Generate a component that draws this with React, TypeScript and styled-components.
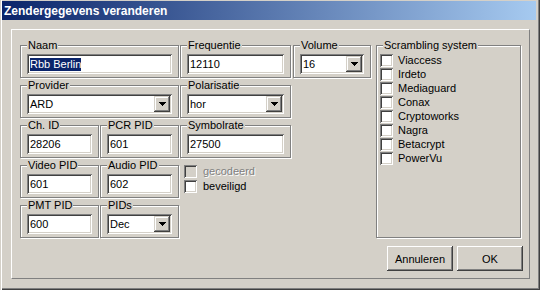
import React from "react";
import styled, { createGlobalStyle } from "styled-components";

const Global = createGlobalStyle`
  html, body { margin: 0; padding: 0; background: #d4d0c8; }
  body { font-family: "Liberation Sans", Arial, sans-serif; font-size: 11px; color: #000; }
  * { box-sizing: border-box; }
`;

const Window = styled.div`
  width: 540px;
  height: 290px;
  background: #d4d0c8;
  padding: 1px 4px 4px 2px;
  display: flex;
  flex-direction: column;
  box-shadow: inset 1px 0 #d4d0c8, inset 2px 0 #fff, inset -1px -1px #404040, inset -2px -2px #808080;
`;

const TitleBar = styled.div`
  height: 19px;
  flex: none;
  display: flex;
  align-items: center;
  padding-left: 2px;
  background: linear-gradient(to right, #0a246a, #a6caf0);
  color: #fff;
  font: bold 12px "Liberation Sans", Arial, sans-serif;
  white-space: nowrap;
`;

const Client = styled.div`
  flex: 1;
  display: flex;
  padding: 9px 6px 7px 9px;
`;

const Panel = styled.div`
  flex: 1;
  display: flex;
  flex-direction: column;
  border: 1px solid;
  border-color: #fff #808080 #808080 #fff;
  padding: 15px 7px 7px 8px;
`;

const Fields = styled.div`
  display: grid;
  grid-template-columns: 79px 1px 79px 1px 111px 2px 78px 5px 145px;
  grid-template-rows: repeat(5, 33px);
  row-gap: 7px;
`;

const Group = styled.div<{ $col: string; $row: string; $pad?: string }>`
  position: relative;
  grid-column: ${(p) => p.$col};
  grid-row: ${(p) => p.$row};
  border: 1px solid #808080;
  box-shadow: inset 1px 1px #fff, 1px 1px #fff;
  padding: ${(p) => p.$pad ?? "8px 6px 0 6px"};
`;

const Legend = styled.span`
  position: absolute;
  top: -7px;
  left: 6px;
  padding: 0 1px;
  background: #d4d0c8;
  line-height: 13px;
  white-space: nowrap;
`;

const sunken = `
  box-shadow: inset 1px 1px #808080, inset -1px -1px #fff, inset 2px 2px #404040, inset -2px -2px #d4d0c8;
`;

const Edit = styled.div`
  height: 20px;
  width: 100%;
  background: #fff;
  ${sunken}
  display: flex;
  align-items: center;
  padding: 0 2px 0 3px;
  line-height: 13px;
  white-space: nowrap;
`;

const Selected = styled.span`
  background: #0a246a;
  color: #fff;
`;

const Combo = styled.div`
  height: 20px;
  width: 100%;
  background: #fff;
  ${sunken}
  display: flex;
  align-items: center;
  padding: 2px 2px 2px 3px;
  line-height: 13px;
`;

const ComboText = styled.span`
  flex: 1;
`;

const DropButton = styled.span`
  width: 16px;
  height: 16px;
  background: #d4d0c8;
  box-shadow: inset -1px -1px #404040, inset 1px 1px #d4d0c8, inset -2px -2px #808080, inset 2px 2px #fff;
  display: flex;
  align-items: center;
  justify-content: center;
`;

const CheckList = styled.div<{ $gap: number }>`
  display: flex;
  flex-direction: column;
  gap: ${(p) => p.$gap}px;
`;

const CheckRow = styled.div<{ $space: number }>`
  display: flex;
  align-items: center;
  height: 13px;
  gap: ${(p) => p.$space}px;
  line-height: 13px;
  white-space: nowrap;
`;

const Box = styled.span<{ $disabled?: boolean }>`
  width: 13px;
  height: 13px;
  flex: none;
  background: ${(p) => (p.$disabled ? "#d4d0c8" : "#fff")};
  ${sunken}
`;

const CheckLabel = styled.span<{ $disabled?: boolean }>`
  color: ${(p) => (p.$disabled ? "#808080" : "#000")};
  text-shadow: ${(p) => (p.$disabled ? "1px 1px #fff" : "none")};
`;

const Plain = styled.div<{ $col: string; $row: string }>`
  grid-column: ${(p) => p.$col};
  grid-row: ${(p) => p.$row};
  padding-left: 4px;
`;

const ButtonRow = styled.div`
  display: flex;
  justify-content: flex-end;
  gap: 4px;
  margin-top: 8px;
  margin-right: -1px;
`;

const Button = styled.button`
  width: 66px;
  height: 25px;
  border: none;
  padding: 0;
  background: #d4d0c8;
  font: 11px "Liberation Sans", Arial, sans-serif;
  color: #000;
  box-shadow: inset -1px -1px #404040, inset 1px 1px #fff, inset -2px -2px #808080, inset 2px 2px #d4d0c8;
`;

const Arrow = () => (
  <svg width="7" height="4" viewBox="0 0 7 4" shapeRendering="crispEdges">
    <rect x="0" y="0" width="7" height="1" fill="#000" />
    <rect x="1" y="1" width="5" height="1" fill="#000" />
    <rect x="2" y="2" width="3" height="1" fill="#000" />
    <rect x="3" y="3" width="1" height="1" fill="#000" />
  </svg>
);

const ComboBox = ({ value }: { value: string }) => (
  <Combo>
    <ComboText>{value}</ComboText>
    <DropButton>
      <Arrow />
    </DropButton>
  </Combo>
);

const scrambling = ["Viaccess", "Irdeto", "Mediaguard", "Conax", "Cryptoworks", "Nagra", "Betacrypt", "PowerVu"];

export default function App() {
  return (
    <>
      <Global />
      <Window>
        <TitleBar>Zendergegevens veranderen</TitleBar>
        <Client>
          <Panel>
            <Fields>
              <Group $col="1 / 4" $row="1">
                <Legend>Naam</Legend>
                <Edit>
                  <Selected>Rbb Berlin</Selected>
                </Edit>
              </Group>
              <Group $col="5" $row="1">
                <Legend>Frequentie</Legend>
                <Edit>12110</Edit>
              </Group>
              <Group $col="7" $row="1">
                <Legend>Volume</Legend>
                <ComboBox value="16" />
              </Group>
              <Group $col="9" $row="1 / 6" $pad="8px 2px 0 3px">
                <Legend>Scrambling system</Legend>
                <CheckList $gap={1}>
                  {scrambling.map((s) => (
                    <CheckRow key={s} $space={5}>
                      <Box />
                      <span>{s}</span>
                    </CheckRow>
                  ))}
                </CheckList>
              </Group>

              <Group $col="1 / 4" $row="2">
                <Legend>Provider</Legend>
                <ComboBox value="ARD" />
              </Group>
              <Group $col="5" $row="2">
                <Legend>Polarisatie</Legend>
                <ComboBox value="hor" />
              </Group>

              <Group $col="1" $row="3">
                <Legend>Ch. ID</Legend>
                <Edit>28206</Edit>
              </Group>
              <Group $col="3" $row="3">
                <Legend>PCR PID</Legend>
                <Edit>601</Edit>
              </Group>
              <Group $col="5" $row="3">
                <Legend>Symbolrate</Legend>
                <Edit>27500</Edit>
              </Group>

              <Group $col="1" $row="4">
                <Legend>Video PID</Legend>
                <Edit>601</Edit>
              </Group>
              <Group $col="3" $row="4">
                <Legend>Audio PID</Legend>
                <Edit>602</Edit>
              </Group>
              <Plain $col="5" $row="4">
                <CheckList $gap={2}>
                  <CheckRow $space={6}>
                    <Box $disabled />
                    <CheckLabel $disabled>gecodeerd</CheckLabel>
                  </CheckRow>
                  <CheckRow $space={6}>
                    <Box />
                    <CheckLabel>beveiligd</CheckLabel>
                  </CheckRow>
                </CheckList>
              </Plain>

              <Group $col="1" $row="5">
                <Legend>PMT PID</Legend>
                <Edit>600</Edit>
              </Group>
              <Group $col="3" $row="5">
                <Legend>PIDs</Legend>
                <ComboBox value="Dec" />
              </Group>
            </Fields>
            <ButtonRow>
              <Button>Annuleren</Button>
              <Button>OK</Button>
            </ButtonRow>
          </Panel>
        </Client>
      </Window>
    </>
  );
}
